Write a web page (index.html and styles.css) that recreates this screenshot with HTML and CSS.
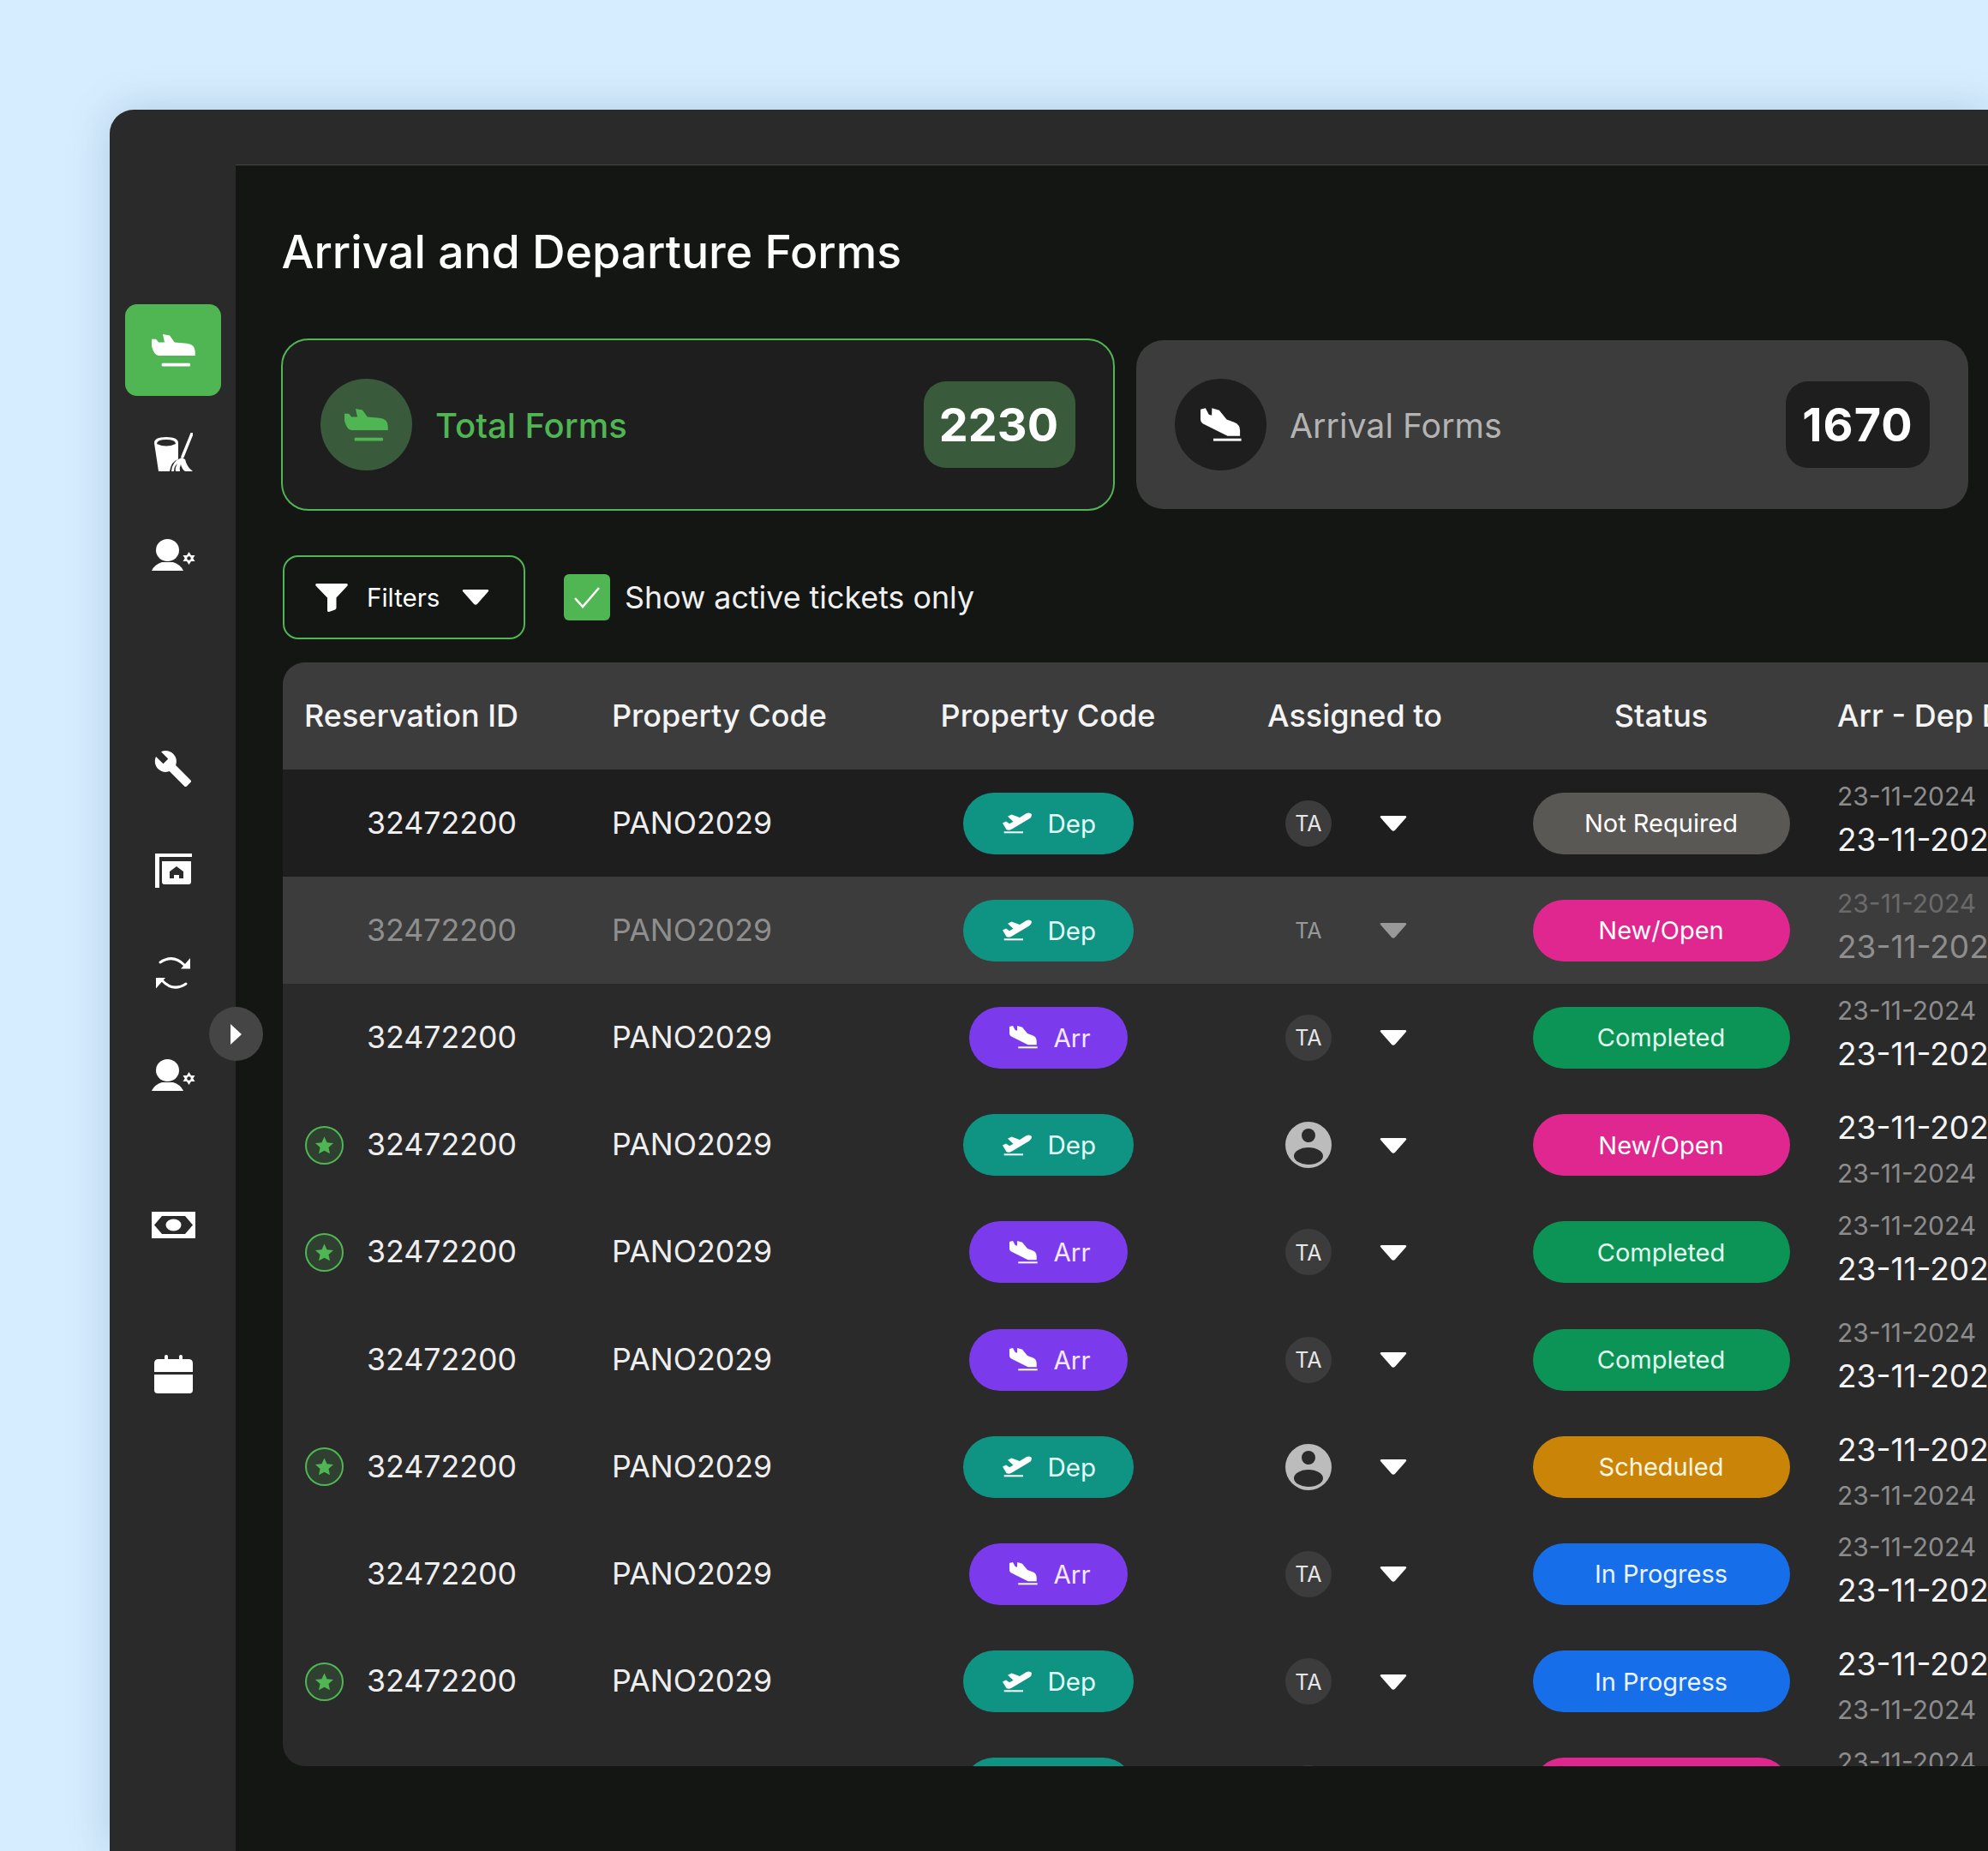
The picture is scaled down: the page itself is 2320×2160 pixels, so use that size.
FILE: index.html
```html
<!DOCTYPE html>
<html lang="en">
<head>
<meta charset="utf-8">
<title>Arrival and Departure Forms</title>
<link rel="stylesheet" href="styles.css">
</head>
<body>
<svg class="defs" width="0" height="0" aria-hidden="true">
  <defs>
    <symbol id="i-level" viewBox="0 0 51 38">
      <path d="M0 5.7 L5 5.7 L8.3 9.6 L15 9.6 L13 0 L21 1.5 L26.7 9.6 L41 10.7 Q50.7 12 50.7 20 L50.7 25 L8 25 Q3 25 0 14 Z"/>
      <rect x="11.7" y="33.8" width="33.3" height="3.6" rx="1"/>
    </symbol>
    <symbol id="i-arr" viewBox="0 0 33 27">
      <path d="M0 1 L4 0 L6.7 5 L9 5.7 L9.2 0 L15 1.7 L21 9 L27 11.2 Q31.7 13 31.7 18 L31.7 22.3 L21.7 22.3 L1.7 12.3 Q0 11 0 9 Z"/>
      <rect x="10.3" y="24.3" width="22.4" height="2" />
    </symbol>
    <symbol id="i-dep" viewBox="0 0 34 25">
      <path d="M0 12.5 L4 10.5 L8 13.3 L12.5 10.8 L6 4.8 L10.5 2.5 L20 6 L28 1 Q32 -.5 33.8 2 Q34.5 5.5 31 7.5 L10 20 Q7 21.5 4.5 20 Z"/>
      <rect x="1.7" y="22.3" width="22.3" height="2"/>
    </symbol>
    <symbol id="i-user" viewBox="0 0 51 37">
      <ellipse cx="18.5" cy="13" rx="13.5" ry="13"/>
      <path d="M0 37 Q3 30 12 27 L25 27 Q34 30 37 37 Z"/>
      <path d="M43.5 15 L46 19 L50.5 19 L48.3 22.5 L50.5 26 L46 26 L43.5 30 L41 26 L36.5 26 L38.7 22.5 L36.5 19 L41 19 Z"/>
      <circle cx="43.5" cy="22.5" r="2.2" fill="#2a2a2a"/>
    </symbol>
    <symbol id="i-caret" viewBox="0 0 32 18">
      <path d="M2.5 0 L29.5 0 Q32 0 31 2 L17.8 17 Q16 18.5 14.2 17 L1 2 Q0 0 2.5 0 Z"/>
    </symbol>
    <symbol id="i-star" viewBox="0 0 24 24">
      <path d="M12 1.5 L15.2 8.6 L23 9.4 L17.2 14.6 L18.8 22.3 L12 18.4 L5.2 22.3 L6.8 14.6 L1 9.4 L8.8 8.6 Z"/>
    </symbol>
    <symbol id="i-person" viewBox="0 0 54 54">
      <circle cx="27" cy="27" r="27" fill="#bcbcbc"/>
      <circle cx="27" cy="16" r="8" fill="#2a2a2a"/>
      <ellipse cx="27" cy="40" rx="17" ry="10" fill="#2a2a2a"/>
    </symbol>
  </defs>
</svg>

<div class="frame">
  <nav class="sidebar">
    <a class="nav-item nav-active"><svg class="ic-level"><use href="#i-level"/></svg></a>
    <a class="nav-item">
      <svg class="ic-broom" viewBox="0 0 45 46">
        <path d="M0 12 Q0 5 14 5 Q28 5 28 12 L28 31 Q20 33 18 45 L5 45 Z M3 13 Q14 18 25 13 Q25 8 14 8 Q3 8 3 13 Z" fill-rule="evenodd"/>
        <path d="M44 1 L33 28" class="stroke-w3"/>
        <path d="M20 45 Q21 33 32 29 L36 31 Q38 40 45 45 L36 45 Q32 42 31 37 Q29 41 30 45 L25 45 Q24 41 27 36 Q23 39 23 45 Z"/>
      </svg>
    </a>
    <a class="nav-item"><svg class="ic-user"><use href="#i-user"/></svg></a>
    <a class="nav-item nav-gap-l">
      <svg class="ic-wrench" viewBox="0 0 24 24"><path d="M22.7 19l-9.1-9.1c.9-2.3.4-5-1.5-6.9-2-2-5-2.4-7.4-1.3L9 6 6 9 1.6 4.7C.4 7.1.9 10.1 2.9 12.1c1.9 1.9 4.6 2.4 6.9 1.5l9.1 9.1c.4.4 1 .4 1.4 0l2.3-2.3c.5-.4.5-1.1.1-1.4z"/></svg>
    </a>
    <a class="nav-item">
      <svg class="ic-sign" viewBox="0 0 43 40">
        <path d="M0 0 H43 V4 H5 V40 H0 Z"/>
        <path fill-rule="evenodd" d="M8 9 H42 V33 Q42 36 39 36 H11 Q8 36 8 33 Z M25 15 L17 21 V29 H22 V25 H28 V29 H33 V21 Z"/>
      </svg>
    </a>
    <a class="nav-item">
      <svg class="ic-sync" viewBox="0 0 40 39">
        <path class="stroke-w2" d="M5 7 Q20 -3 33 10"/>
        <path d="M40 2 V14.5 H29 Z"/>
        <path class="stroke-w2" d="M35 32 Q20 42 7 28"/>
        <path d="M0 37.5 V25 H11 Z"/>
      </svg>
    </a>
    <a class="nav-item"><svg class="ic-user"><use href="#i-user"/></svg></a>
    <a class="nav-item nav-gap-m">
      <svg class="ic-money" viewBox="0 0 51 31">
        <path fill-rule="evenodd" d="M0 0 H51 V31 H0 Z M3 15.5 L12 26 H39 L48 15.5 L39 5 H12 Z"/>
        <ellipse cx="25.5" cy="15.5" rx="9" ry="7"/>
      </svg>
    </a>
    <a class="nav-item nav-gap-m">
      <svg class="ic-cal" viewBox="0 0 45 45">
        <rect x="12" y="0" width="4" height="8" rx="2"/>
        <rect x="29" y="0" width="4" height="8" rx="2"/>
        <path d="M0 20 V10 Q0 5 5 5 H40 Q45 5 45 10 V20 Z"/>
        <path d="M0 23 H45 V41 Q45 45 41 45 H4 Q0 45 0 41 Z"/>
      </svg>
    </a>
    <button class="collapse" aria-label="Expand"><span class="collapse-tri"></span></button>
  </nav>

  <main class="main">
    <h1 class="title">Arrival and Departure Forms</h1>

    <section class="stats">
      <div class="stat stat-active">
        <span class="stat-ico"><svg class="ic-level"><use href="#i-level"/></svg></span>
        <span class="stat-label">Total Forms</span>
        <span class="stat-num">2230</span>
      </div>
      <div class="stat">
        <span class="stat-ico"><svg class="ic-arr-lg"><use href="#i-arr"/></svg></span>
        <span class="stat-label">Arrival Forms</span>
        <span class="stat-num">1670</span>
      </div>
    </section>

    <section class="toolbar">
      <button class="filter">
        <svg class="ic-funnel" viewBox="0 0 38 33"><path d="M2 0 H36 Q38.5 0 37.5 2.5 L24.5 16.5 V28 Q24.5 29.5 23 30.5 L16 33 Q14 33.5 14 31 V16.5 L.5 2.5 Q-.5 0 2 0 Z"/></svg>
        <span>Filters</span>
        <svg class="ic-caret"><use href="#i-caret"/></svg>
      </button>
      <label class="check">
        <span class="check-box"><svg class="ic-check" viewBox="0 0 32 26"><path d="M2 14 L11 24 L30 2"/></svg></span>
        <span>Show active tickets only</span>
      </label>
    </section>

    <section class="table">
      <div class="thead">
        <div class="th th-first">Reservation ID</div>
        <div class="th">Property Code</div>
        <div class="th th-c">Property Code</div>
        <div class="th th-c">Assigned to</div>
        <div class="th th-c">Status</div>
        <div class="th th-date">Arr - Dep Date</div>
      </div>

      <div class="row row-dark">
        <div class="c-id"><span class="star-slot"></span><span>32472200</span></div>
        <div class="c-code">PANO2029</div>
        <div class="c-mid"><span class="pill pill-dep"><svg class="ic-dep"><use href="#i-dep"/></svg>Dep</span></div>
        <div class="c-who"><span class="ta">TA</span><svg class="ic-caret"><use href="#i-caret"/></svg></div>
        <div class="c-mid"><span class="status st-none">Not Required</span></div>
        <div class="c-date"><span class="d-sm">23-11-2024</span><span class="d-lg">23-11-2024</span></div>
      </div>

      <div class="row row-dim">
        <div class="c-id"><span class="star-slot"></span><span>32472200</span></div>
        <div class="c-code">PANO2029</div>
        <div class="c-mid"><span class="pill pill-dep"><svg class="ic-dep"><use href="#i-dep"/></svg>Dep</span></div>
        <div class="c-who"><span class="ta">TA</span><svg class="ic-caret"><use href="#i-caret"/></svg></div>
        <div class="c-mid"><span class="status st-new">New/Open</span></div>
        <div class="c-date"><span class="d-sm">23-11-2024</span><span class="d-lg">23-11-2024</span></div>
      </div>

      <div class="row">
        <div class="c-id"><span class="star-slot"></span><span>32472200</span></div>
        <div class="c-code">PANO2029</div>
        <div class="c-mid"><span class="pill pill-arr"><svg class="ic-arr"><use href="#i-arr"/></svg>Arr</span></div>
        <div class="c-who"><span class="ta">TA</span><svg class="ic-caret"><use href="#i-caret"/></svg></div>
        <div class="c-mid"><span class="status st-done">Completed</span></div>
        <div class="c-date"><span class="d-sm">23-11-2024</span><span class="d-lg">23-11-2024</span></div>
      </div>

      <div class="row">
        <div class="c-id"><span class="star-slot star-on"><svg class="ic-star"><use href="#i-star"/></svg></span><span>32472200</span></div>
        <div class="c-code">PANO2029</div>
        <div class="c-mid"><span class="pill pill-dep"><svg class="ic-dep"><use href="#i-dep"/></svg>Dep</span></div>
        <div class="c-who"><svg class="avatar"><use href="#i-person"/></svg><svg class="ic-caret"><use href="#i-caret"/></svg></div>
        <div class="c-mid"><span class="status st-new">New/Open</span></div>
        <div class="c-date c-date-rev"><span class="d-lg">23-11-2024</span><span class="d-sm">23-11-2024</span></div>
      </div>

      <div class="row">
        <div class="c-id"><span class="star-slot star-on"><svg class="ic-star"><use href="#i-star"/></svg></span><span>32472200</span></div>
        <div class="c-code">PANO2029</div>
        <div class="c-mid"><span class="pill pill-arr"><svg class="ic-arr"><use href="#i-arr"/></svg>Arr</span></div>
        <div class="c-who"><span class="ta">TA</span><svg class="ic-caret"><use href="#i-caret"/></svg></div>
        <div class="c-mid"><span class="status st-done">Completed</span></div>
        <div class="c-date"><span class="d-sm">23-11-2024</span><span class="d-lg">23-11-2024</span></div>
      </div>

      <div class="row">
        <div class="c-id"><span class="star-slot"></span><span>32472200</span></div>
        <div class="c-code">PANO2029</div>
        <div class="c-mid"><span class="pill pill-arr"><svg class="ic-arr"><use href="#i-arr"/></svg>Arr</span></div>
        <div class="c-who"><span class="ta">TA</span><svg class="ic-caret"><use href="#i-caret"/></svg></div>
        <div class="c-mid"><span class="status st-done">Completed</span></div>
        <div class="c-date"><span class="d-sm">23-11-2024</span><span class="d-lg">23-11-2024</span></div>
      </div>

      <div class="row">
        <div class="c-id"><span class="star-slot star-on"><svg class="ic-star"><use href="#i-star"/></svg></span><span>32472200</span></div>
        <div class="c-code">PANO2029</div>
        <div class="c-mid"><span class="pill pill-dep"><svg class="ic-dep"><use href="#i-dep"/></svg>Dep</span></div>
        <div class="c-who"><svg class="avatar"><use href="#i-person"/></svg><svg class="ic-caret"><use href="#i-caret"/></svg></div>
        <div class="c-mid"><span class="status st-sched">Scheduled</span></div>
        <div class="c-date c-date-rev"><span class="d-lg">23-11-2024</span><span class="d-sm">23-11-2024</span></div>
      </div>

      <div class="row">
        <div class="c-id"><span class="star-slot"></span><span>32472200</span></div>
        <div class="c-code">PANO2029</div>
        <div class="c-mid"><span class="pill pill-arr"><svg class="ic-arr"><use href="#i-arr"/></svg>Arr</span></div>
        <div class="c-who"><span class="ta">TA</span><svg class="ic-caret"><use href="#i-caret"/></svg></div>
        <div class="c-mid"><span class="status st-prog">In Progress</span></div>
        <div class="c-date"><span class="d-sm">23-11-2024</span><span class="d-lg">23-11-2024</span></div>
      </div>

      <div class="row">
        <div class="c-id"><span class="star-slot star-on"><svg class="ic-star"><use href="#i-star"/></svg></span><span>32472200</span></div>
        <div class="c-code">PANO2029</div>
        <div class="c-mid"><span class="pill pill-dep"><svg class="ic-dep"><use href="#i-dep"/></svg>Dep</span></div>
        <div class="c-who"><span class="ta">TA</span><svg class="ic-caret"><use href="#i-caret"/></svg></div>
        <div class="c-mid"><span class="status st-prog">In Progress</span></div>
        <div class="c-date c-date-rev"><span class="d-lg">23-11-2024</span><span class="d-sm">23-11-2024</span></div>
      </div>

      <div class="row">
        <div class="c-id"><span class="star-slot"></span><span>32472200</span></div>
        <div class="c-code">PANO2029</div>
        <div class="c-mid"><span class="pill pill-dep"><svg class="ic-dep"><use href="#i-dep"/></svg>Dep</span></div>
        <div class="c-who"><span class="ta">TA</span><svg class="ic-caret"><use href="#i-caret"/></svg></div>
        <div class="c-mid"><span class="status st-new">New/Open</span></div>
        <div class="c-date"><span class="d-sm">23-11-2024</span><span class="d-lg">23-11-2024</span></div>
      </div>
    </section>
  </main>
</div>
</body>
</html>
```

FILE: styles.css
```css
* { box-sizing: border-box; }
html, body { margin: 0; padding: 0; height: 2160px; overflow: hidden; }
body {
  background: #d6edff;
  font-family: Inter, "Liberation Sans", sans-serif;
  color: #fff;
}
.defs { position: absolute; }
svg { fill: currentColor; display: block; flex: none; }

.frame {
  margin: 128px 0 0 128px;
  width: 2192px;
  height: 2032px;
  display: flex;
  background: #2a2a2a;
  border-radius: 28px 0 0 0;
  box-shadow: 0 0 50px rgba(60, 90, 120, .22);
  overflow: hidden;
}

/* sidebar */
.sidebar {
  width: 147px;
  flex: none;
  padding: 227px 17px 0 18px;
  display: flex;
  flex-direction: column;
  gap: 12.4px;
  position: relative;
  z-index: 2;
  height: 100%;
}
.nav-item {
  height: 107px;
  display: flex;
  align-items: center;
  justify-content: center;
  border-radius: 14px;
  color: #fff;
  flex: none;
}
.nav-active { background: #4fb653; }
.nav-gap-l { margin-top: 130px; }
.nav-gap-m { margin-top: 55px; }
.ic-level { width: 51px; height: 38px; }
.ic-broom { width: 45px; height: 46px; }
.ic-user { width: 51px; height: 37px; }
.ic-wrench { width: 46px; height: 46px; }
.ic-sign { width: 43px; height: 40px; }
.ic-sync { width: 40px; height: 39px; }
.ic-money { width: 51px; height: 31px; }
.ic-cal { width: 45px; height: 45px; }
.stroke-w3 { fill: none; stroke: #fff; stroke-width: 3.4; stroke-linecap: round; }
.stroke-w2 { fill: none; stroke: #fff; stroke-width: 3; stroke-linecap: round; }
.collapse {
  position: absolute;
  left: 116px;
  top: 1047px;
  width: 63px;
  height: 63px;
  border: 0;
  padding: 0;
  border-radius: 50%;
  background: #454545;
  display: flex;
  align-items: center;
  justify-content: center;
}
.collapse-tri {
  width: 0;
  height: 0;
  border-left: 13px solid #fff;
  border-top: 12px solid transparent;
  border-bottom: 12px solid transparent;
}

/* main */
.main {
  flex: 1;
  min-width: 0;
  margin-top: 64px;
  background: #141614;
  border-top: 1px solid #454545;
  padding: 0 0 0 55px;
  overflow: hidden;
}
.title {
  margin: 0 0 0 -1.5px;
  height: 204px;
  padding-top: 67px;
  font-size: 53.5px;
  line-height: 68px;
  font-weight: 500;
  color: #fff;
}

.stats {
  display: grid;
  grid-template-columns: 971px 971px;
  gap: 25px;
}
.stat {
  height: 197px;
  background: #3c3c3c;
  border-radius: 32px;
  padding: 0 45px;
  display: flex;
  align-items: center;
}
.stat-active {
  margin: -2px 0 -2px -2px;
  height: 201px;
  background: #1e1e1e;
  border: 2.5px solid #4fb653;
  padding: 0 44px 0 44px;
}
.stat-ico {
  width: 107px;
  height: 107px;
  border-radius: 50%;
  background: #1e1e1e;
  display: flex;
  align-items: center;
  justify-content: center;
  flex: none;
}
.stat-active .stat-ico { background: #3a5a3c; color: #4fb653; }
.ic-arr-lg { width: 48px; height: 40px; }
.stat-label {
  margin-left: 27px;
  padding-top: 2px;
  font-size: 39.3px;
  font-weight: 400;
  color: #b4b4b4;
  flex: 1;
}
.stat-active .stat-label { color: #4fb653; font-size: 40px; font-weight: 500; }
.stat-num {
  width: 168px;
  height: 101px;
  display: flex;
  align-items: center;
  justify-content: center;
  background: #1e1e1e;
  border-radius: 26px;
  font-size: 54px;
  font-weight: 700;
  letter-spacing: 1px;
  color: #fff;
}
.stat-active .stat-num { width: 177px; padding-right: 2px; letter-spacing: 0; background: #3a5a3c; }

.toolbar {
  margin-top: 54px;
  height: 98px;
  display: flex;
  align-items: center;
  gap: 45px;
}
.filter {
  width: 283px;
  height: 98px;
  border: 2px solid #4fb653;
  border-radius: 18px;
  background: transparent;
  color: #fff;
  font: 400 29.5px Inter, "Liberation Sans", sans-serif;
  display: flex;
  align-items: center;
  padding: 0 0 0 36px;
}
.ic-funnel { width: 38px; height: 33px; margin-right: 22px; }
.filter .ic-caret { margin-left: 26px; }
.ic-caret { width: 32px; height: 18px; }
.check {
  display: flex;
  align-items: center;
  gap: 17px;
  font-size: 35.8px;
  color: #f0f0f0;
}
.check-box {
  width: 54px;
  height: 54px;
  border-radius: 6px;
  background: #4fb653;
  display: flex;
  align-items: center;
  justify-content: center;
}
.ic-check { width: 32px; height: 26px; fill: none; stroke: #fff; stroke-width: 2.6; }

/* table */
.table {
  margin-top: 27px;
  height: 1288px;
  border-radius: 26px 0 0 26px;
  background: #2a2a2a;
  overflow: hidden;
}
.thead, .row {
  display: grid;
  grid-template-columns: 384px 331px 356px 360px 355px 300px;
  align-items: center;
}
.thead {
  height: 125px;
  padding-bottom: 2px;
  background: #3c3c3c;
  font-size: 36px;
  font-weight: 500;
  color: #f4f4f4;
}
.th-first { padding-left: 25px; }
.th-c { text-align: center; }
.th-date { padding-left: 28px; white-space: nowrap; }
.row {
  height: 125.2px;
  font-size: 35.7px;
  color: #eeeeee;
}
.row-dark { background: #1e1e1e; }
.row-dim { background: #3c3c3c; color: #8e8e8e; }
.c-id { display: flex; align-items: center; padding-left: 26px; gap: 27px; }
.c-id > span:last-child, .c-code { padding-bottom: 2px; }
.star-slot { width: 45px; height: 45px; flex: none; }
.star-on {
  border-radius: 50%;
  border: 2.5px solid #4fb653;
  background: #2f3f30;
  color: #4fb653;
  display: flex;
  align-items: center;
  justify-content: center;
}
.ic-star { width: 23px; height: 23px; }
.c-mid { display: flex; justify-content: center; }
.pill {
  height: 72px;
  border-radius: 36px;
  display: flex;
  align-items: center;
  font-size: 29.5px;
  font-weight: 400;
}
.pill-dep { width: 199px; padding-left: 46px; gap: 19px; background: #0f9484; color: #e4fff8; }
.pill-arr { width: 185px; padding-left: 47px; gap: 19px; background: #7c3aed; color: #f3e8ff; }
.pill svg { color: #fff; }
.ic-dep { width: 34px; height: 25px; }
.ic-arr { width: 33px; height: 27px; }
.c-who { display: flex; align-items: center; padding-left: 99px; gap: 56px; color: #fff; }
.c-who .ic-caret { margin-top: 1px; }
.ta {
  width: 54px;
  height: 54px;
  border-radius: 50%;
  background: #3c3c3c;
  display: flex;
  align-items: center;
  justify-content: center;
  padding-top: 1px;
  font-size: 25px;
  color: #e6e6e6;
}
.avatar { width: 54px; height: 54px; }
.row-dim .c-who { color: #999; }
.row-dim .ta { color: #999; }
.status {
  width: 300px;
  height: 72px;
  border-radius: 36px;
  display: flex;
  align-items: center;
  justify-content: center;
  font-size: 29px;
  color: #fff;
}
.st-none { background: #5a5854; }
.st-new { background: #e0278f; }
.st-done { background: #0b9455; color: #e4fff0; }
.st-sched { background: #ca8508; color: #fff6e0; }
.st-prog { background: #166fe8; color: #eaf3ff; }
.c-date {
  display: flex;
  flex-direction: column;
  gap: 11px;
  padding: 0 0 10px 28px;
  white-space: nowrap;
}
.c-date-rev { gap: 13px; padding: 11px 0 0 28px; }
.d-sm { font-size: 30px; line-height: 38px; color: #8c8c8c; }
.d-lg { font-size: 37px; line-height: 42px; color: #f4f4f4; }
.row-dim .d-sm { color: #6a6a6a; }
.row-dim .d-lg { color: #8e8e8e; }
```
